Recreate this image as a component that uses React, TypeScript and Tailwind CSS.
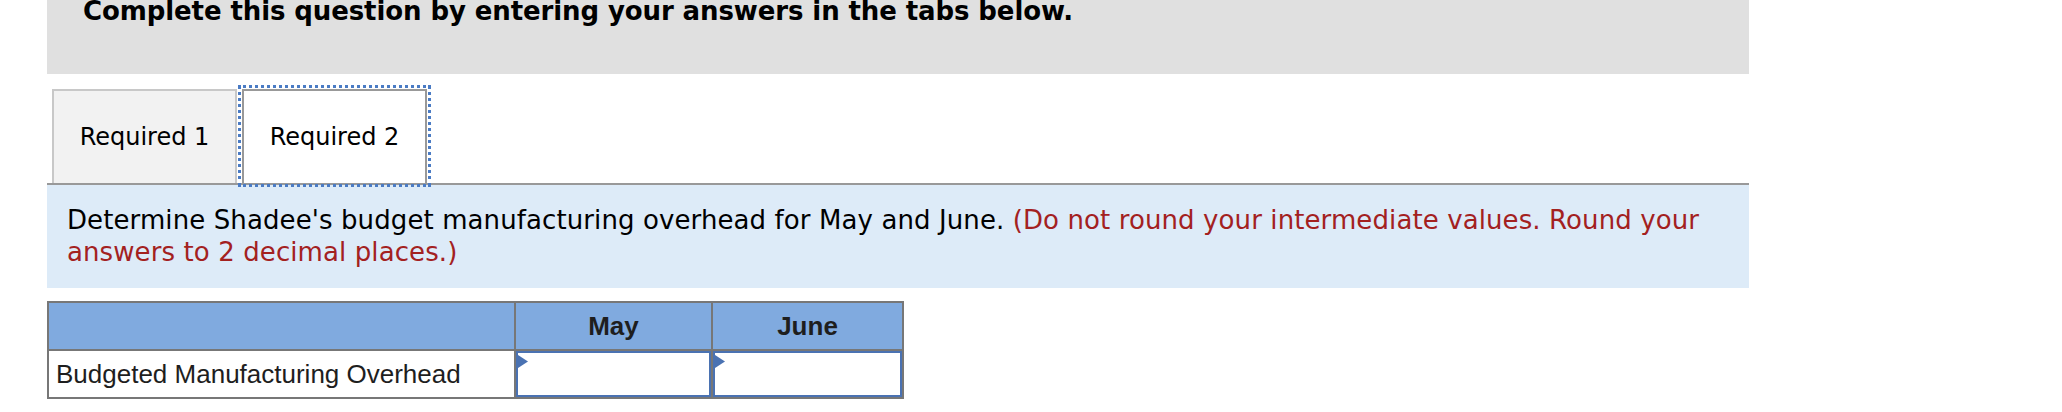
const verdana = { fontFamily: '"DejaVu Sans", Verdana, sans-serif' };

function Tabs() {
  return (
    <div className="flex items-end pt-[15px] pl-[5px] border-b-2 border-[#999999] h-[111px]">
      <div className="w-[185px] h-[94px] flex items-center justify-center bg-[#f2f2f2] border-2 border-b-0 border-[#c8c8c8] text-[24px] text-black">
        Required 1
      </div>
      <div className="ml-[5px] w-[185px] h-[94px] flex items-center justify-center bg-white border-2 border-b-0 border-[#999999] text-[24px] text-black outline-[3px] outline-dotted outline-[#4a7bc4] outline-offset-[1px]">
        Required 2
      </div>
    </div>
  );
}

function InputCell() {
  return (
    <div className="relative bg-white border-2 border-[#4a72b2] h-full">
      <svg className="absolute left-0 top-[2px]" width="10" height="13" viewBox="0 0 10 13">
        <polygon points="0,0 10,6.5 0,13" fill="#4a72b2" />
      </svg>
    </div>
  );
}

export default function App() {
  return (
    <div className="w-[2062px] h-[412px] bg-white overflow-hidden" style={verdana}>
      <div className="ml-[47px] w-[1702px]">
        <div className="flow-root h-[74px] bg-[#e0e0e0] pl-[36px]">
          <h2 className="-mt-[2px] text-[26px] font-bold leading-none text-black tracking-[-0.1px]">
            Complete this question by entering your answers in the tabs below.
          </h2>
        </div>

        <Tabs />

        <div className="bg-[#ddebf8] pl-[20px] pr-[20px] pt-[19px] h-[103px] text-[26px] leading-[32px] text-black tracking-[0.1px]">
          Determine Shadee's budget manufacturing overhead for May and June.{' '}
          <span className="text-[#a3211f]">
            (Do not round your intermediate values. Round your answers to 2 decimal places.)
          </span>
        </div>

        <div
          className="mt-[13px] w-[857px] grid grid-cols-[465px_195px_189px] grid-rows-[46px_46px] gap-[2px] p-[2px] bg-[#777777] text-[26px] text-[#1e1e1e]"
          style={{ fontFamily: '"Liberation Sans", Arial, sans-serif' }}
        >
          <div className="bg-[#80aadf]" />
          <div className="bg-[#80aadf] flex items-center justify-center font-bold">May</div>
          <div className="bg-[#80aadf] flex items-center justify-center font-bold">June</div>
          <div className="bg-white flex items-center pl-[7px]">Budgeted Manufacturing Overhead</div>
          <InputCell />
          <InputCell />
        </div>
      </div>
    </div>
  );
}
